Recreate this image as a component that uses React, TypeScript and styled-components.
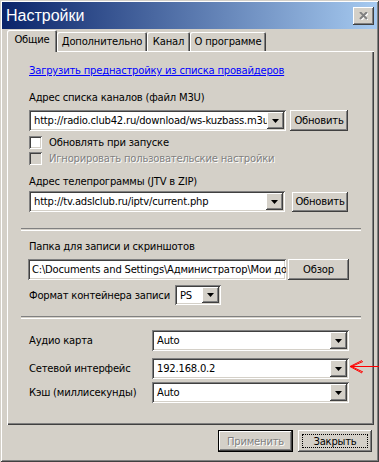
import styled, { createGlobalStyle, css } from 'styled-components';

const FACE = '#d4d0c8';
const FONT = '"DejaVu Sans", Verdana, sans-serif';

const GlobalStyle = createGlobalStyle`
  html, body {
    margin: 0;
    padding: 0;
    background: ${FACE};
  }
  body {
    font-family: ${FONT};
    font-size: 10px;
    letter-spacing: -0.2px;
    color: #000;
  }
`;

const raised = css`
  box-shadow: inset -1px -1px #404040, inset 1px 1px #fff,
    inset -2px -2px #808080, inset 2px 2px ${FACE};
`;

const sunken = css`
  box-shadow: inset 1px 1px #808080, inset -1px -1px #fff,
    inset 2px 2px #404040, inset -2px -2px ${FACE};
`;

function Arrow() {
  return (
    <svg width="7" height="4" viewBox="0 0 7 4">
      <path d="M0 0h7L3.5 4z" fill="#000" />
    </svg>
  );
}

function Combo({ value, width, height = 21 }: { value: string; width: number; height?: number }) {
  return (
    <ComboBox style={{ width, height }}>
      <ComboText>{value}</ComboText>
      <DropButton>
        <Arrow />
      </DropButton>
    </ComboBox>
  );
}

function Check({ label, disabled }: { label: string; disabled?: boolean }) {
  return (
    <CheckRow $top={disabled ? 3 : 5}>
      <CheckBox $disabled={disabled} />
      <CheckLabel $disabled={disabled}>{label}</CheckLabel>
    </CheckRow>
  );
}

const tabs = [
  { name: 'Общие', w: 50 },
  { name: 'Дополнительно', w: 90 },
  { name: 'Канал', w: 43 },
  { name: 'О программе', w: 76 },
];

export default function App() {
  return (
    <>
      <GlobalStyle />
      <Window>
        <TitleBar>
          <Title>Настройки</Title>
          <CloseButton>
            <svg width="9" height="8" viewBox="0 0 9 8">
              <path d="M1 1l7 7M8 1l-7 7" stroke="#fff" strokeWidth="2" transform="translate(1 0)" />
              <path d="M1 0l7 7M8 0l-7 7" stroke="#808080" strokeWidth="2" />
            </svg>
          </CloseButton>
        </TitleBar>

        <Tabs>
          {tabs.map((t, i) => (
            <Tab key={t.name} $active={i === 0} $w={t.w}>
              {t.name}
            </Tab>
          ))}
        </Tabs>

        <Panel>
          <Link>Загрузить преднастройку из списка провайдеров</Link>

          <Label $top={14}>Адрес списка каналов (файл M3U)</Label>
          <Row $top={6}>
            <Combo value="http://radio.club42.ru/download/ws-kuzbass.m3u" width={257} />
            <Button $w={58} $h={21} $left={4}>Обновить</Button>
          </Row>
          <Check label="Обновлять при запуске" />
          <Check label="Игнорировать пользовательские настройки" disabled />

          <Label $top={10}>Адрес телепрограммы (JTV в ZIP)</Label>
          <Row $top={3}>
            <Combo value="http://tv.adslclub.ru/iptv/current.php" width={256} />
            <Button $w={56} $h={20} $left={7}>Обновить</Button>
          </Row>

          <Separator $top={16} />

          <Label $top={9}>Папка для записи и скриншотов</Label>
          <Row $top={6}>
            <TextField>C:\Documents and Settings\Администратор\Мои документы</TextField>
            <Button $w={61} $h={21} $left={2}>Обзор</Button>
          </Row>
          <Row $top={5}>
            <RowLabel $w={146}>Формат контейнера записи</RowLabel>
            <Combo value="PS" width={46} height={20} />
          </Row>

          <Separator $top={11} />

          <Row $top={11}>
            <RowLabel $w={123}>Аудио карта</RowLabel>
            <Combo value="Auto" width={197} />
          </Row>
          <Row $top={7}>
            <RowLabel $w={123}>Сетевой интерфейс</RowLabel>
            <Combo value="192.168.0.2" width={197} />
          </Row>
          <Row $top={3}>
            <RowLabel $w={123}>Кэш (миллисекунды)</RowLabel>
            <Combo value="Auto" width={197} />
          </Row>
        </Panel>

        <Footer>
          <Button $w={75} $h={22} $default disabled>
            Применить
          </Button>
          <Button $w={74} $h={22} $focused>
            Закрыть
          </Button>
        </Footer>

        <Annotation width="30" height="16" viewBox="0 0 30 16">
          <path
            d="M1 7.5H30M1 7.5L13 1.5M1 7.5L13 14M2.5 7.5L14 2.5M2.5 7.5L14 13"
            stroke="#ff0000"
            strokeWidth="1"
            fill="none"
          />
        </Annotation>
      </Window>
    </>
  );
}

const Window = styled.div`
  position: relative;
  box-sizing: border-box;
  width: 379px;
  height: 462px;
  padding: 3px;
  background: ${FACE};
  box-shadow: inset 1px 1px ${FACE}, inset -1px -1px #404040,
    inset 2px 2px #fff, inset -2px -2px #808080;
  overflow: hidden;
`;

const TitleBar = styled.div`
  height: 27px;
  margin: -1px -1px 0 -1px;
  display: flex;
  align-items: center;
  justify-content: space-between;
  padding: 0 3px 0 4px;
  background: linear-gradient(to right, #0a246a, #a6caf0);
`;

const Title = styled.span`
  font-family: "Liberation Sans", Arial, sans-serif;
  font-size: 16px;
  letter-spacing: 0;
  color: #fff;
  padding-top: 1px;
`;

const CloseButton = styled.div`
  width: 21px;
  height: 18px;
  display: flex;
  align-items: center;
  justify-content: center;
  background: ${FACE};
  ${raised};
`;

const Tabs = styled.div`
  display: flex;
  align-items: flex-end;
  height: 22px;
  padding-left: 4px;
  position: relative;
  z-index: 1;
`;

const Tab = styled.div<{ $active?: boolean; $w: number }>`
  box-sizing: border-box;
  width: ${(p) => p.$w}px;
  height: ${(p) => (p.$active ? 22 : 19)}px;
  margin-bottom: ${(p) => (p.$active ? -1 : 0)}px;
  display: flex;
  align-items: center;
  justify-content: center;
  padding-bottom: ${(p) => (p.$active ? 3 : 0)}px;
  background: ${FACE};
  border-radius: 2px 2px 0 0;
  box-shadow: inset 1px 1px #fff, inset -1px 0 #404040, inset -2px 0 #808080;
`;

const Panel = styled.div`
  box-sizing: border-box;
  height: 374px;
  margin: 0 2px 0 4px;
  padding: 13px 0 0 22px;
  background: ${FACE};
  box-shadow: inset 1px 1px #fff, inset -1px -1px #404040,
    inset -2px -2px #808080;
`;

const Link = styled.div`
  height: 13px;
  line-height: 13px;
  color: #0000ff;
  text-decoration: underline;
`;

const Label = styled.div<{ $top: number }>`
  margin-top: ${(p) => p.$top}px;
  height: 13px;
  line-height: 13px;
`;

const Row = styled.div<{ $top: number }>`
  margin-top: ${(p) => p.$top}px;
  display: flex;
  align-items: center;
`;

const RowLabel = styled.span<{ $w: number }>`
  width: ${(p) => p.$w}px;
  flex-shrink: 0;
`;

const ComboBox = styled.div`
  box-sizing: border-box;
  display: flex;
  align-items: center;
  padding: 2px;
  background: #fff;
  flex-shrink: 0;
  ${sunken};
`;

const ComboText = styled.span`
  flex: 1;
  min-width: 0;
  padding-left: 3px;
  white-space: nowrap;
  overflow: hidden;
`;

const DropButton = styled.div`
  width: 17px;
  height: 100%;
  flex-shrink: 0;
  display: flex;
  align-items: center;
  justify-content: center;
  background: ${FACE};
  ${raised};
`;

const TextField = styled.div`
  box-sizing: border-box;
  width: 258px;
  height: 21px;
  margin-left: -1px;
  padding: 0 4px;
  line-height: 21px;
  background: #fff;
  white-space: nowrap;
  overflow: hidden;
  ${sunken};
`;

const Button = styled.button<{ $w: number; $h: number; $left?: number; $default?: boolean; $focused?: boolean }>`
  box-sizing: border-box;
  width: ${(p) => p.$w}px;
  height: ${(p) => p.$h}px;
  margin-left: ${(p) => p.$left ?? 0}px;
  padding: 0;
  border: none;
  background: ${FACE};
  font-family: ${FONT};
  font-size: 10px;
  letter-spacing: -0.2px;
  color: #000;
  ${(p) =>
    p.$default
      ? css`
          box-shadow: inset 0 0 0 1px #000, inset -2px -2px #404040,
            inset 2px 2px #fff, inset -3px -3px #808080;
        `
      : raised};
  ${(p) =>
    p.$focused &&
    css`
      outline: 1px dotted #000;
      outline-offset: -5px;
    `}
  &:disabled {
    color: #808080;
    text-shadow: 1px 1px #fff;
  }
`;

const CheckRow = styled.div<{ $top: number }>`
  margin-top: ${(p) => p.$top}px;
  display: flex;
  align-items: center;
  height: 13px;
`;

const CheckBox = styled.div<{ $disabled?: boolean }>`
  width: 13px;
  height: 13px;
  flex-shrink: 0;
  background: ${(p) => (p.$disabled ? FACE : '#fff')};
  ${sunken};
`;

const CheckLabel = styled.span<{ $disabled?: boolean }>`
  margin-left: 7px;
  color: ${(p) => (p.$disabled ? '#808080' : '#000')};
  text-shadow: ${(p) => (p.$disabled ? '1px 1px #fff' : 'none')};
`;

const Separator = styled.div<{ $top: number }>`
  margin-top: ${(p) => p.$top}px;
  margin-left: -8px;
  width: 340px;
  height: 1px;
  border-top: 1px solid #808080;
  border-bottom: 1px solid #fff;
`;

const Footer = styled.div`
  display: flex;
  justify-content: flex-end;
  gap: 5px;
  margin-top: 5px;
  padding-right: 4px;
`;

const Annotation = styled.svg`
  position: absolute;
  left: 349px;
  top: 359px;
`;
